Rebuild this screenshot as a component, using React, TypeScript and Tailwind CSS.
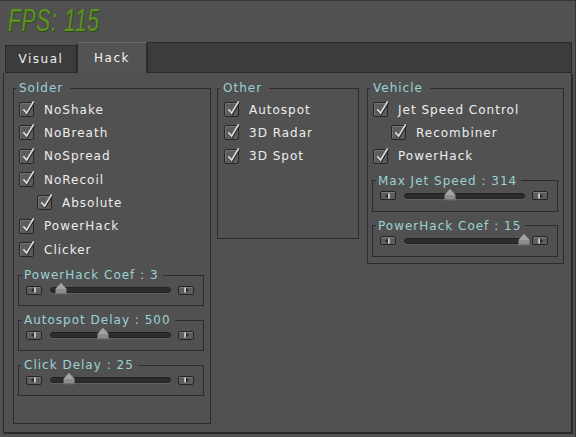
import React from 'react';

type CheckProps = { label: string; indent?: boolean };

function Check({ label, indent }: CheckProps) {
  return (
    <div className={`flex items-center h-[23.33px] ${indent ? 'pl-[18px]' : ''}`}>
      <span className="relative w-[15px] h-[15px] shrink-0 rounded-[2px] border border-[#262626] bg-[#5c5c5c] shadow-[inset_1px_1px_0_#747474]">
        <svg viewBox="0 0 16 16" className="absolute left-[1px] top-[-3px] w-[15px] h-[16px] overflow-visible">
          <path d="M2.5 9.5 L6 13.5 L13.5 1" fill="none" stroke="#2a2a2a" strokeWidth="2.4" transform="translate(0.6 0.8)" />
          <path d="M2.5 9.5 L6 13.5 L13.5 1" fill="none" stroke="#dedede" strokeWidth="1.8" />
        </svg>
      </span>
      <span className="ml-[10px] text-[12px] leading-[16px] tracking-[1px] text-[#ededed]">{label}</span>
    </div>
  );
}

function ArrowBtn({ dir }: { dir: 'left' | 'right' }) {
  return (
    <span className="w-[16px] h-[9px] shrink-0 rounded-[2px] border border-[#242424] bg-[#5e5e5e] shadow-[inset_0_1px_0_#7a7a7a] flex items-center justify-center">
      <svg viewBox="0 0 8 6" className="w-[8px] h-[6px]">
        {dir === 'left' ? (
          <>
            <polygon points="1,3 4,0.5 4,5.5" fill="#2a2a2a" />
            <rect x="4.2" y="0.5" width="1.4" height="5" fill="#f0f0f0" />
          </>
        ) : (
          <>
            <rect x="2.4" y="0.5" width="1.4" height="5" fill="#f0f0f0" />
            <polygon points="7,3 4,0.5 4,5.5" fill="#2a2a2a" />
          </>
        )}
      </svg>
    </span>
  );
}

type SliderProps = { title: string; pos: number; inVehicle?: boolean };

function Slider({ title, pos, inVehicle }: SliderProps) {
  return (
    <fieldset className={`border border-[#2c2c2c] ${inVehicle ? 'ml-[4px] mr-[5px]' : 'ml-[4px] mr-[6px]'}`}>
      <legend className="ml-[3px] pl-[2px] pr-[4px] text-[12px] leading-[16px] tracking-[1px] text-[#9bd1d5]">
        {title}
      </legend>
      <div className="flex items-center h-[14px] mb-[8px] pl-[7px] pr-[9px]">
        <ArrowBtn dir="left" />
        <div className="relative flex-1 h-[6px] ml-[8px] mr-[7px] rounded-full bg-[#2d2d2d] border border-[#222] shadow-[0_1px_0_#626262]">
          <svg
            viewBox="0 0 13 12"
            className="absolute top-[-5px] w-[13px] h-[12px] -translate-x-1/2"
            style={{ left: `${pos * 100}%` }}
          >
            <polygon points="6.5,0 12,6 12,12 1,12 1,6" fill="#8c8c8c" />
            <polygon points="6.5,0 12,6 1,6" fill="#a4a4a4" />
            <rect x="1" y="10.5" width="11" height="1.5" fill="#5a5a5a" />
          </svg>
        </div>
        <ArrowBtn dir="right" />
      </div>
    </fieldset>
  );
}

function Group({ title, className, children }: { title: string; className: string; children: React.ReactNode }) {
  return (
    <fieldset className={`border border-[#2c2c2c] ${className}`}>
      <legend className="ml-[2px] pl-[3px] pr-[7px] text-[12px] leading-[16px] tracking-[1px] text-[#9bd1d5]">
        {title}
      </legend>
      {children}
    </fieldset>
  );
}

export default function App() {
  return (
    <div className="w-[576px] h-[437px] bg-[#515151] border-t border-r border-[#363636] font-['DejaVu_Sans',sans-serif] overflow-hidden">
      <div className="h-[41px] pl-[8px] pt-[3px]">
        <span className="inline-block origin-left scale-x-[0.68] italic font-['Liberation_Sans',sans-serif] text-[31px] leading-[34px] tracking-[1px] text-[#5c9322] [text-shadow:1px_1px_0_#2d4a10]">
          FPS: 115
        </span>
      </div>

      <div className="ml-[3px] w-[569px]">
        <div className="flex items-end h-[31px]">
          <div className="ml-[2px] w-[72px] h-[28px] bg-[#3c3c3c] border border-[#2a2a2a] flex items-center justify-center text-[12px] tracking-[1.5px] text-[#efefef]">
            Visual
          </div>
          <div className="w-[70px] h-[31px] bg-[#535353] border-t border-x border-t-[#6a6a6a] border-x-[#2e2e2e] flex items-center justify-center text-[12px] tracking-[1.5px] text-[#f2f2f2]">
            Hack
          </div>
          <div className="flex-1 h-[31px] bg-[#3c3c3c] border border-[#2a2a2a]" />
        </div>

        <div className="h-[360px] border-x border-b border-[#2a2a2a] shadow-[1px_1px_0_#2a2a2a] pl-[9px] pt-[7px] flex items-start">
          <Group title="Solder" className="w-[198px] pb-[27px]">
            <div className="pl-[5px] pt-[2px]">
              <Check label="NoShake" />
              <Check label="NoBreath" />
              <Check label="NoSpread" />
              <Check label="NoRecoil" />
              <Check label="Absolute" indent />
              <Check label="PowerHack" />
              <Check label="Clicker" />
            </div>
            <div className="flex flex-col gap-[6px] mt-[6px]">
              <Slider title="PowerHack Coef : 3" pos={0.08} />
              <Slider title="Autospot Delay : 500" pos={0.44} />
              <Slider title="Click Delay : 25" pos={0.15} />
            </div>
          </Group>

          <Group title="Other" className="ml-[6px] w-[142px] pb-[70px]">
            <div className="pl-[6px] pt-[2px]">
              <Check label="Autospot" />
              <Check label="3D Radar" />
              <Check label="3D Spot" />
            </div>
          </Group>

          <Group title="Vehicle" className="ml-[8px] w-[197px] pb-[6px]">
            <div className="pl-[5px] pt-[2px]">
              <Check label="Jet Speed Control" />
              <Check label="Recombiner" indent />
              <Check label="PowerHack" />
            </div>
            <div className="flex flex-col gap-[6px] mt-[5px]">
              <Slider title="Max Jet Speed : 314" pos={0.38} inVehicle />
              <Slider title="PowerHack Coef : 15" pos={1} inVehicle />
            </div>
          </Group>
        </div>
      </div>
    </div>
  );
}
